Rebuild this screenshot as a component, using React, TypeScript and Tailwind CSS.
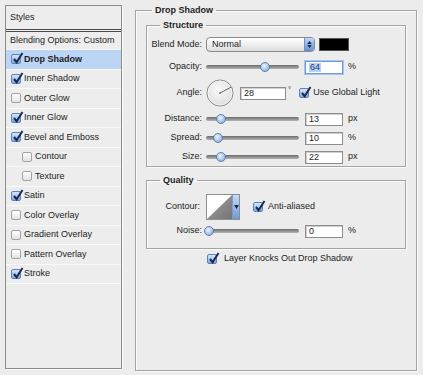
import type { ReactNode } from "react";

const layers = [
  { name: "Drop Shadow", on: true, selected: true },
  { name: "Inner Shadow", on: true },
  { name: "Outer Glow", on: false },
  { name: "Inner Glow", on: true },
  { name: "Bevel and Emboss", on: true },
  { name: "Contour", on: false, sub: true },
  { name: "Texture", on: false, sub: true },
  { name: "Satin", on: true },
  { name: "Color Overlay", on: false },
  { name: "Gradient Overlay", on: false },
  { name: "Pattern Overlay", on: false },
  { name: "Stroke", on: true },
];

function Check({ on }: { on: boolean }) {
  return (
    <span
      className={`relative inline-block w-[10px] h-[10px] shrink-0 border rounded-[2px] ${
        on
          ? "border-[#5b80ba] bg-gradient-to-b from-[#d9e7f9] to-[#80a8de]"
          : "border-[#a2a2a2] bg-gradient-to-b from-[#ffffff] to-[#e2e2e2]"
      }`}
    >
      {on && (
        <svg viewBox="0 0 12 12" className="absolute left-[0px] top-[-3px] w-[12px] h-[12px] overflow-visible">
          <path d="M2 7 L4.6 10.2 L10.5 1" fill="none" stroke="#172a52" strokeWidth="2" />
        </svg>
      )}
    </span>
  );
}

function Slider({ knob }: { knob: number }) {
  return (
    <div className="relative w-[93px] h-[14px] flex items-center">
      <div className="w-full h-[4px] rounded-full bg-gradient-to-b from-[#6c6c6c] to-[#b4b4b4]" />
      {/* knob */}
      <span
        className="absolute top-[2px] w-[10px] h-[10px] rounded-full border border-[#5a7fb6] bg-[radial-gradient(circle_at_40%_35%,#eef4fd,#75a0d8)]"
        style={{ left: knob - 5 }}
      />
    </div>
  );
}

function Field({ value, className = "w-[38px]", focus }: { value: string; className?: string; focus?: boolean }) {
  return (
    <div
      className={`${className} h-[13px] bg-white border flex items-center pl-[3px] leading-none ${
        focus ? "border-[#6d9ad8] shadow-[0_0_0_1px_#a9c6ee]" : "border-[#8d8d8d] shadow-[inset_1px_1px_0_#d0d0d0]"
      }`}
    >
      {focus ? <span className="bg-[#b7d1f3] text-[#1b3e86] px-[1px]">{value}</span> : value}
    </div>
  );
}

function Row({ label, w = "w-[55px]", className, children }: { label: string; w?: string; className: string; children: ReactNode }) {
  return (
    <div className={`flex items-center ${className}`}>
      <span className={`${w} shrink-0 text-right`}>{label}</span>
      {children}
    </div>
  );
}

function Dial() {
  return (
    <svg viewBox="0 0 28 28" className="w-[28px] h-[28px] shrink-0">
      <defs>
        <radialGradient id="dialFill" cx="0.45" cy="0.4" r="0.7">
          <stop offset="0%" stopColor="#fbfbfb" />
          <stop offset="100%" stopColor="#d9d9d9" />
        </radialGradient>
      </defs>
      <circle cx="14" cy="14" r="13" fill="url(#dialFill)" stroke="#8a8a8a" strokeWidth="1" />
      <circle cx="14" cy="14" r="12" fill="none" stroke="#ffffff" strokeWidth="0.6" />
      <line x1="14" y1="14" x2="25" y2="8.2" stroke="#555" strokeWidth="0.9" />
      <circle cx="14" cy="14" r="1" fill="#777" />
    </svg>
  );
}

function ContourThumb() {
  return (
    <div className="w-[34px] h-[26px] flex border border-[#8e8e8e] bg-white">
      <svg viewBox="0 0 26 24" preserveAspectRatio="none" className="w-[25px] h-full">
        <defs>
          <linearGradient id="cont" x1="0" y1="0" x2="1" y2="1">
            <stop offset="0%" stopColor="#a4a4a4" />
            <stop offset="100%" stopColor="#747474" />
          </linearGradient>
        </defs>
        <path d="M0 24 L26 0 L26 24 Z" fill="url(#cont)" />
      </svg>
      <div className="flex-1 flex items-center justify-center bg-gradient-to-b from-[#c6dbf6] to-[#6d9ad6] border-l border-[#7b9bcc]">
        <svg viewBox="0 0 6 5" className="w-[5px] h-[4px]">
          <path d="M0 0 L6 0 L3 5 Z" fill="#13254a" />
        </svg>
      </div>
    </div>
  );
}

const frame = "border border-[#a3a3a3] shadow-[inset_1px_1px_0_#fbfbfb,1px_1px_0_#fbfbfb]";

export default function App() {
  return (
    <div className="w-[423px] h-[375px] bg-[#ececec] flex items-start font-['Liberation_Sans',Arial,sans-serif] text-[9px] text-[#1c1c1c] overflow-hidden">
      {/* Styles list */}
      <div className="ml-[5px] mt-[5px] w-[117px] h-[364px] border border-[#8c8c8c] bg-[#ededed] flex flex-col shadow-[1px_1px_0_#fafafa]">
        <div className="h-[26px] shrink-0 flex items-center pl-[4px] border-b-[3px] border-double border-[#4a4a4a]">Styles</div>
        <div className="h-[18px] shrink-0 flex items-center pl-[4px] border-b border-[#f9f9f9]">Blending Options: Custom</div>
        {layers.map((l) => (
          <div
            key={l.name}
            className={`h-[19.5px] shrink-0 flex items-center gap-[3px] border-b border-[#f9f9f9] ${
              l.sub ? "pl-[16px]" : "pl-[5px]"
            } ${l.selected ? "bg-[#bcd5f4] font-bold" : ""}`}
          >
            <Check on={l.on} />
            <span>{l.name}</span>
          </div>
        ))}
      </div>

      {/* Drop Shadow panel */}
      <fieldset className={`ml-[13px] mt-[4px] w-[279px] h-[367px] px-[10px] ${frame}`}>
        <legend className="ml-[6px] px-[3px] font-bold leading-[12px]">Drop Shadow</legend>

        <fieldset className={`mt-[3px] w-[260px] h-[148px] ${frame}`}>
          <legend className="ml-[13px] px-[3px] font-bold leading-[12px]">Structure</legend>

          <Row label="Blend Mode:" className="mt-[6px] h-[15px]">
            <div className="ml-[4px] w-[109px] h-[15px] flex rounded-[4px] border border-[#8a8a8a] overflow-hidden bg-gradient-to-b from-[#ffffff] to-[#dedede]">
              <span className="flex-1 pl-[5px] flex items-center">Normal</span>
              <span className="w-[10px] flex flex-col items-center justify-center gap-[1px] bg-gradient-to-b from-[#c2d8f5] to-[#5e8fd2] border-l border-[#6f92c8]">
                <svg viewBox="0 0 6 4" className="w-[5px] h-[3px]"><path d="M0 4 L3 0 L6 4 Z" fill="#14264b" /></svg>
                <svg viewBox="0 0 6 4" className="w-[5px] h-[3px]"><path d="M0 0 L6 0 L3 4 Z" fill="#14264b" /></svg>
              </span>
            </div>
            <span className="ml-[4px] w-[30px] h-[13px] bg-black border border-[#555]" />
          </Row>

          <Row label="Opacity:" className="mt-[8px] h-[14px]">
            <span className="ml-[4px]"><Slider knob={59} /></span>
            <span className="ml-[6px]"><Field value="64" focus /></span>
            <span className="ml-[5px]">%</span>
          </Row>

          <Row label="Angle:" className="mt-[5px] h-[28px]">
            <span className="ml-[4px] flex"><Dial /></span>
            <span className="ml-[6px]"><Field value="28" className="w-[46px]" /></span>
            <span className="ml-[2px] self-start mt-[5px] text-[8px]">°</span>
            <span className="ml-[8px] flex"><Check on /></span>
            <span className="ml-[4px]">Use Global Light</span>
          </Row>

          <Row label="Distance:" className="mt-[5px] h-[14px]">
            <span className="ml-[4px]"><Slider knob={15} /></span>
            <span className="ml-[6px]"><Field value="13" /></span>
            <span className="ml-[5px]">px</span>
          </Row>

          <Row label="Spread:" className="mt-[5px] h-[14px]">
            <span className="ml-[4px]"><Slider knob={12} /></span>
            <span className="ml-[6px]"><Field value="10" /></span>
            <span className="ml-[5px]">%</span>
          </Row>

          <Row label="Size:" className="mt-[5px] h-[14px]">
            <span className="ml-[4px]"><Slider knob={15} /></span>
            <span className="ml-[6px]"><Field value="22" /></span>
            <span className="ml-[5px]">px</span>
          </Row>
        </fieldset>

        <fieldset className={`mt-[7px] w-[260px] h-[75px] ${frame}`}>
          <legend className="ml-[13px] px-[3px] font-bold leading-[12px]">Quality</legend>

          <Row label="Contour:" w="w-[53px]" className="mt-[7px] h-[27px]">
            <span className="ml-[6px] flex"><ContourThumb /></span>
            <span className="ml-[13px] flex"><Check on /></span>
            <span className="ml-[5px]">Anti-aliased</span>
          </Row>

          <Row label="Noise:" className="mt-[4px] h-[14px]">
            <span className="ml-[4px]"><Slider knob={3} /></span>
            <span className="ml-[6px]"><Field value="0" /></span>
            <span className="ml-[5px]">%</span>
          </Row>
        </fieldset>

        <div className="mt-[3px] ml-[61px] h-[14px] flex items-center gap-[7px]">
          <Check on />
          <span>Layer Knocks Out Drop Shadow</span>
        </div>
      </fieldset>
    </div>
  );
}
